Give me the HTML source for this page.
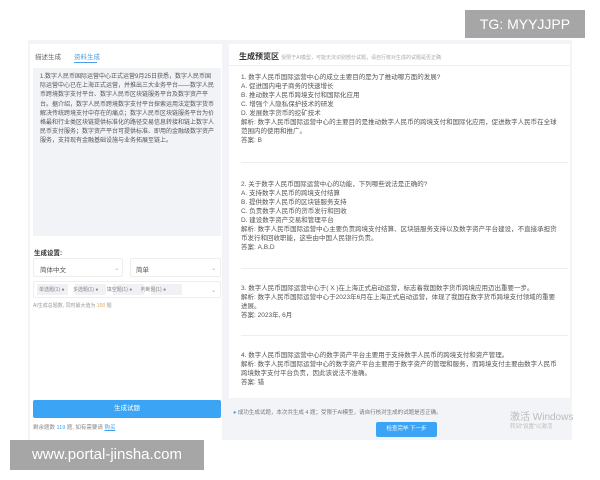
<!DOCTYPE html><html><head><meta charset="utf-8"><style>
*{margin:0;padding:0;box-sizing:border-box}
body{width:600px;height:480px;background:#fff;position:relative;overflow:hidden;font-family:"Liberation Sans","Noto Sans CJK SC",sans-serif;color:#555;font-size:6.5px}
.a{position:absolute;white-space:nowrap}
.bg{position:absolute;left:28px;top:40px;width:544px;height:400px;background:#f3f4f7}
.card{position:absolute;background:#fff}
.ln{position:absolute;left:241px;width:327px;height:1px;background:#eceef2}
.q{position:absolute;left:241px;line-height:9px;font-size:6.5px;color:#555}
</style></head><body>
<div class="bg"></div>
<div class="card" style="left:30px;top:44px;width:192px;height:396px"></div>
<div class="card" style="left:229px;top:44px;width:341px;height:354px"></div>
<div class="a" style="left:35px;top:51px;color:#666">描述生成</div>
<div class="a" style="left:74px;top:51px;color:#4a9fe8">资料生成</div>
<div class="a" style="left:74px;top:62px;width:23px;height:1px;background:#4a9fe8"></div>
<div class="a" style="left:33px;top:68px;width:188px;height:168px;background:#f1f3f7"></div>
<div class="a" style="left:40px;top:73px;width:176px;white-space:normal;line-height:9.2px;font-size:6px;color:#555">1.数字人民币国际运营中心正式运营9月25日获悉，数字人民币国际运营中心已在上海正式运营，并推出三大业务平台——数字人民币跨境数字支付平台、数字人民币区块链服务平台及数字资产平台。据介绍，数字人民币跨境数字支付平台探索运用法定数字货币解决传统跨境支付中存在的痛点；数字人民币区块链服务平台为价格最和行业类区块链提供标准化的路径交易信息转接和链上数字人民币支付服务；数字资产平台可提供标准、即用的金融级数字资产服务，支持现有金融基础设施与业务拓展至链上。</div>
<div class="a" style="left:34px;top:247px;color:#333;font-weight:bold">生成设置:</div>
<div class="a" style="left:33px;top:258px;width:90px;height:19px;border:1px solid #eee;border-radius:2px"></div>
<div class="a" style="left:40px;top:264px">简体中文</div><div class="a" style="left:114px;top:264px;color:#aaa">⌄</div>
<div class="a" style="left:130px;top:258px;width:91px;height:19px;border:1px solid #eee;border-radius:2px"></div>
<div class="a" style="left:136px;top:264px">简单</div><div class="a" style="left:211px;top:264px;color:#aaa">⌄</div>
<div class="a" style="left:33px;top:281px;width:188px;height:17px;border:1px solid #eee;border-radius:2px"></div>
<div class="a" style="left:37px;top:284px;width:31px;height:11px;background:#f0f1f4"></div>
<div class="a" style="left:75px;top:284px;width:31px;height:11px;background:#f0f1f4"></div>
<div class="a" style="left:113px;top:284px;width:31px;height:11px;background:#f0f1f4"></div>
<div class="a" style="left:151px;top:284px;width:31px;height:11px;background:#f0f1f4"></div>
<div class="a" style="left:39px;top:286px;font-size:5px;color:#888">单选题(1) ●&nbsp;&nbsp;&nbsp;&nbsp;&nbsp;&nbsp;多选题(1) ●&nbsp;&nbsp;&nbsp;&nbsp;&nbsp;&nbsp;填空题(1) ●&nbsp;&nbsp;&nbsp;&nbsp;&nbsp;&nbsp;判断题(1) ●</div>
<div class="a" style="left:211px;top:286px;color:#aaa">⌄</div>
<div class="a" style="left:33px;top:302px;font-size:5px;color:#999">AI生成总题数, 同时最大值为 <span style="color:#e8a54a">100</span> 题</div>
<div class="a" style="left:33px;top:400px;width:188px;height:18px;background:#3ba4f4;border-radius:2px;color:#fff;text-align:center;line-height:18px">生成试题</div>
<div class="a" style="left:33px;top:423px;font-size:5.5px;color:#888">剩余题数 <span style="color:#3ba4f4">119</span> 题, 如有需要请 <span style="color:#3ba4f4;text-decoration:underline">购买</span></div>
<div class="a" style="left:239px;top:51px;font-size:8px;font-weight:bold;color:#333">生成预览区 <span style="font-size:5px;font-weight:normal;color:#aaa">受限于AI模型，可能无法识别部分试题，请自行核对生成的试题是否正确</span></div>
<div class="ln" style="top:65px;left:229px;width:341px"></div>
<div class="q" style="top:73px">1. 数字人民币国际运营中心的成立主要目的是为了推动哪方面的发展?<br>A. 促进国内电子商务的快速增长<br>B. 推动数字人民币跨境支付和国际化应用<br>C. 增强个人隐私保护技术的研发<br>D. 发展数字货币的挖矿技术<br>解析: 数字人民币国际运营中心的主要目的是推动数字人民币的跨境支付和国际化应用，促进数字人民币在全球<br>范围内的使用和推广。<br>答案: B</div>
<div class="ln" style="top:162px"></div>
<div class="q" style="top:180px">2. 关于数字人民币国际运营中心的功能，下列哪些说法是正确的?<br>A. 支持数字人民币的跨境支付结算<br>B. 提供数字人民币的区块链服务支持<br>C. 负责数字人民币的货币发行和回收<br>D. 建设数字资产交易和管理平台<br>解析: 数字人民币国际运营中心主要负责跨境支付结算、区块链服务支持以及数字资产平台建设，不直接承担货<br>币发行和回收职能，这些由中国人民银行负责。<br>答案: A,B,D</div>
<div class="ln" style="top:268px"></div>
<div class="q" style="top:284px">3. 数字人民币国际运营中心于( X )在上海正式启动运营，标志着我国数字货币跨境应用迈出重要一步。<br>解析: 数字人民币国际运营中心于2023年6月在上海正式启动运营，体现了我国在数字货币跨境支付领域的重要<br>进展。<br>答案: 2023年, 6月</div>
<div class="ln" style="top:335px"></div>
<div class="q" style="top:351px">4. 数字人民币国际运营中心的数字资产平台主要用于支持数字人民币的跨境支付和资产管理。<br>解析: 数字人民币国际运营中心的数字资产平台主要用于数字资产的管理和服务，而跨境支付主要由数字人民币<br>跨境数字支付平台负责，因此该说法不准确。<br>答案: 错</div>
<div class="a" style="left:233px;top:408px;font-size:5.5px;color:#777"><span style="color:#3ba4f4">●</span> 成功生成试题，本次共生成 4 题；受限于AI模型，请自行核对生成的试题是否正确。</div>
<div class="a" style="left:376px;top:422px;width:61px;height:15px;background:#3ba4f4;border-radius:2px;color:#fff;text-align:center;line-height:15px;font-size:5.5px">检查完毕 下一步</div>
<div class="a" style="left:510px;top:408px;font-size:10px;color:#bbb">激活 Windows</div>
<div class="a" style="left:510px;top:422px;font-size:5.5px;color:#bbb">转到"设置"以激活</div>
<div class="a" style="left:465px;top:10px;width:120px;height:28px;background:#a6a6a6;color:#fff;font-size:14px;line-height:28px;text-align:center">TG: MYYJJPP</div>
<div class="a" style="left:10px;top:440px;width:194px;height:30px;background:#a6a6a6;color:#fff;font-size:15px;line-height:30px;text-align:center">www.portal-jinsha.com</div>
</body></html>
